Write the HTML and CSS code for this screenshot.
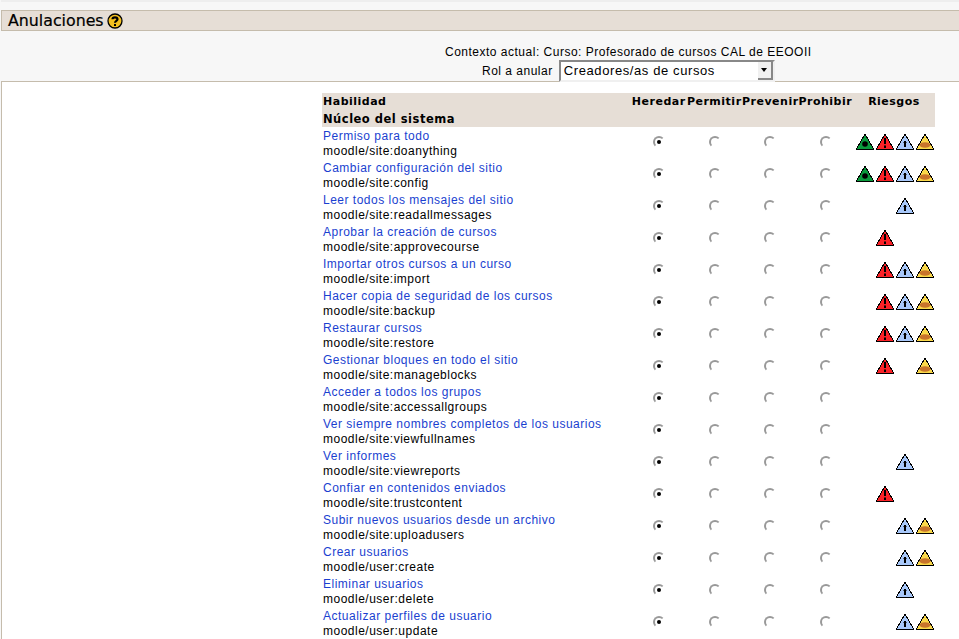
FILE: index.html

```html
<!DOCTYPE html>
<html lang="es">
<head>
  <meta charset="UTF-8" />
  <title>Anulaciones</title>
  <link rel="stylesheet" href="styles.css">
</head>
<body>
<svg class="defs" width="0" height="0">
  <symbol id="r-green" viewBox="0 0 18 17"><path class="tri" d="M9 1 17.500 16H.5Z" fill="#0a9a3c"/><circle cx="9" cy="11" r="2.800" fill="#000"/></symbol>
  <symbol id="r-red" viewBox="0 0 18 17"><path class="tri" d="M9 1 17.500 16H.5Z" fill="#fa2228"/><path d="M8 5h2v6H8ZM8 12.500h2v2.500H8Z" fill="#000"/></symbol>
  <symbol id="r-blue" viewBox="0 0 18 17"><path class="tri" d="M9 1 17.500 16H.5Z" fill="#a8c8fa"/><path d="M8 8h2v6H8ZM7.500 9h3v1h-3Z" fill="#000"/></symbol>
  <symbol id="r-yellow" viewBox="0 0 18 17"><path class="tri" d="M9 1 17.500 16H.5Z" fill="#fad84a"/><ellipse cx="9" cy="12" rx="5.500" ry="2.800" fill="#c8742c"/></symbol>
  <symbol id="r-help" viewBox="0 0 16 16"><circle cx="8" cy="8" r="7" fill="#f4c020" stroke="#000" stroke-width="1.300"/><path d="M5.500 6.200C5.500 3.800 10.500 3.800 10.500 6.200 10.500 7.800 8 7.800 8 9.800" fill="none" stroke="#000" stroke-width="2.200"/><path d="M7 11h2v2H7Z" fill="#000"/></symbol>
</svg>

<div class="topline"></div>
<h2 class="heading">Anulaciones <svg class="help"><use href="#r-help"/></svg></h2>

<div class="context">
  <div>Contexto actual: Curso: Profesorado de cursos CAL de EEOOII</div>
  <div class="role-row">
    <label>Rol a anular</label>
    <div class="fake-select"><span>Creadores/as de cursos</span><b class="arrow"></b></div>
  </div>
</div>

<div class="main">
  <table class="caps">
    <thead>
      <tr class="head1"><th class="name">Habilidad</th><th>Heredar</th><th>Permitir</th><th>Prevenir</th><th>Prohibir</th><th class="risk">Riesgos</th></tr>
      <tr class="head2"><th class="name" colspan="6">Núcleo del sistema</th></tr>
    </thead>
    <tbody>
      <tr><td class="name"><a href="#">Permiso para todo</a><br>moodle/site:doanything</td><td><i class="radio on"></i></td><td><i class="radio"></i></td><td><i class="radio"></i></td><td><i class="radio"></i></td><td class="risk"><svg><use href="#r-green"/></svg><svg><use href="#r-red"/></svg><svg><use href="#r-blue"/></svg><svg><use href="#r-yellow"/></svg></td></tr>
      <tr><td class="name"><a href="#">Cambiar configuración del sitio</a><br>moodle/site:config</td><td><i class="radio on"></i></td><td><i class="radio"></i></td><td><i class="radio"></i></td><td><i class="radio"></i></td><td class="risk"><svg><use href="#r-green"/></svg><svg><use href="#r-red"/></svg><svg><use href="#r-blue"/></svg><svg><use href="#r-yellow"/></svg></td></tr>
      <tr><td class="name"><a href="#">Leer todos los mensajes del sitio</a><br>moodle/site:readallmessages</td><td><i class="radio on"></i></td><td><i class="radio"></i></td><td><i class="radio"></i></td><td><i class="radio"></i></td><td class="risk"><svg class="no"></svg><svg class="no"></svg><svg><use href="#r-blue"/></svg><svg class="no"></svg></td></tr>
      <tr><td class="name"><a href="#">Aprobar la creación de cursos</a><br>moodle/site:approvecourse</td><td><i class="radio on"></i></td><td><i class="radio"></i></td><td><i class="radio"></i></td><td><i class="radio"></i></td><td class="risk"><svg class="no"></svg><svg><use href="#r-red"/></svg><svg class="no"></svg><svg class="no"></svg></td></tr>
      <tr><td class="name"><a href="#">Importar otros cursos a un curso</a><br>moodle/site:import</td><td><i class="radio on"></i></td><td><i class="radio"></i></td><td><i class="radio"></i></td><td><i class="radio"></i></td><td class="risk"><svg class="no"></svg><svg><use href="#r-red"/></svg><svg><use href="#r-blue"/></svg><svg><use href="#r-yellow"/></svg></td></tr>
      <tr><td class="name"><a href="#">Hacer copia de seguridad de los cursos</a><br>moodle/site:backup</td><td><i class="radio on"></i></td><td><i class="radio"></i></td><td><i class="radio"></i></td><td><i class="radio"></i></td><td class="risk"><svg class="no"></svg><svg><use href="#r-red"/></svg><svg><use href="#r-blue"/></svg><svg><use href="#r-yellow"/></svg></td></tr>
      <tr><td class="name"><a href="#">Restaurar cursos</a><br>moodle/site:restore</td><td><i class="radio on"></i></td><td><i class="radio"></i></td><td><i class="radio"></i></td><td><i class="radio"></i></td><td class="risk"><svg class="no"></svg><svg><use href="#r-red"/></svg><svg><use href="#r-blue"/></svg><svg><use href="#r-yellow"/></svg></td></tr>
      <tr><td class="name"><a href="#">Gestionar bloques en todo el sitio</a><br>moodle/site:manageblocks</td><td><i class="radio on"></i></td><td><i class="radio"></i></td><td><i class="radio"></i></td><td><i class="radio"></i></td><td class="risk"><svg class="no"></svg><svg><use href="#r-red"/></svg><svg class="no"></svg><svg><use href="#r-yellow"/></svg></td></tr>
      <tr><td class="name"><a href="#">Acceder a todos los grupos</a><br>moodle/site:accessallgroups</td><td><i class="radio on"></i></td><td><i class="radio"></i></td><td><i class="radio"></i></td><td><i class="radio"></i></td><td class="risk"></td></tr>
      <tr><td class="name"><a href="#">Ver siempre nombres completos de los usuarios</a><br>moodle/site:viewfullnames</td><td><i class="radio on"></i></td><td><i class="radio"></i></td><td><i class="radio"></i></td><td><i class="radio"></i></td><td class="risk"></td></tr>
      <tr><td class="name"><a href="#">Ver informes</a><br>moodle/site:viewreports</td><td><i class="radio on"></i></td><td><i class="radio"></i></td><td><i class="radio"></i></td><td><i class="radio"></i></td><td class="risk"><svg class="no"></svg><svg class="no"></svg><svg><use href="#r-blue"/></svg><svg class="no"></svg></td></tr>
      <tr><td class="name"><a href="#">Confiar en contenidos enviados</a><br>moodle/site:trustcontent</td><td><i class="radio on"></i></td><td><i class="radio"></i></td><td><i class="radio"></i></td><td><i class="radio"></i></td><td class="risk"><svg class="no"></svg><svg><use href="#r-red"/></svg><svg class="no"></svg><svg class="no"></svg></td></tr>
      <tr><td class="name"><a href="#">Subir nuevos usuarios desde un archivo</a><br>moodle/site:uploadusers</td><td><i class="radio on"></i></td><td><i class="radio"></i></td><td><i class="radio"></i></td><td><i class="radio"></i></td><td class="risk"><svg class="no"></svg><svg class="no"></svg><svg><use href="#r-blue"/></svg><svg><use href="#r-yellow"/></svg></td></tr>
      <tr><td class="name"><a href="#">Crear usuarios</a><br>moodle/user:create</td><td><i class="radio on"></i></td><td><i class="radio"></i></td><td><i class="radio"></i></td><td><i class="radio"></i></td><td class="risk"><svg class="no"></svg><svg class="no"></svg><svg><use href="#r-blue"/></svg><svg><use href="#r-yellow"/></svg></td></tr>
      <tr><td class="name"><a href="#">Eliminar usuarios</a><br>moodle/user:delete</td><td><i class="radio on"></i></td><td><i class="radio"></i></td><td><i class="radio"></i></td><td><i class="radio"></i></td><td class="risk"><svg class="no"></svg><svg class="no"></svg><svg><use href="#r-blue"/></svg><svg class="no"></svg></td></tr>
      <tr><td class="name"><a href="#">Actualizar perfiles de usuario</a><br>moodle/user:update</td><td><i class="radio on"></i></td><td><i class="radio"></i></td><td><i class="radio"></i></td><td><i class="radio"></i></td><td class="risk"><svg class="no"></svg><svg class="no"></svg><svg><use href="#r-blue"/></svg><svg><use href="#r-yellow"/></svg></td></tr>
    </tbody>
  </table>
</div>
</body>
</html>
```

FILE: styles.css

```css
html, body { height: 100%; overflow: hidden; }
body { margin: 0; padding-left: 1px; box-sizing: border-box; display: flex; flex-direction: column; background: #f7f7f7; color: #000; font-family: "Liberation Sans", Arial, sans-serif; font-size: 12px; letter-spacing: 0.5px; }
.defs { display: block; height: 0; flex: none; }
.topline { height: 10px; flex: none; box-sizing: border-box; border-top: 2px solid #eee; }
.heading { margin: 0; height: 21px; flex: none; box-sizing: border-box; padding-left: 6px; background: #e6ded6; border: 1px solid #c5bcac; border-width: 1px 0 1px 1px; font-family: "DejaVu Sans", sans-serif; font-size: 15.8px; line-height: 19px; font-weight: normal; letter-spacing: 0; -webkit-text-stroke: 0.2px #000; }
.help { width: 16px; height: 16px; margin-left: -2px; vertical-align: -3px; }
.context { height: 51px; flex: none; box-sizing: border-box; padding-top: 13px; padding-left: 444px; border-bottom: 1px solid #c5bcac; line-height: 16px; }
.role-row { display: flex; align-items: center; margin-left: 37px; gap: 6px; }
.fake-select { width: 216px; height: 22px; box-sizing: border-box; display: flex; align-items: flex-start; justify-content: space-between; padding: 0 0 0 3px; background: #fff; border: 2px solid; border-color: #888 #f0f0f0 #f0f0f0 #888; font-size: 13px; letter-spacing: 0.6px; line-height: 18px; }
.arrow { width: 15px; height: 18px; box-sizing: border-box; background: #f0f0f0; border-right: 2px solid #888; border-bottom: 2px solid #888; position: relative; }
.arrow::after { content: ""; position: absolute; left: 3px; top: 6px; border: 3.500px solid transparent; border-top: 4px solid #000; border-bottom: 0; }
.main { flex: 1; min-height: 0; padding: 11px 0 0 320px; background: #fff; border-left: 1px solid #c5bcac; }
.caps { width: 613px; border-collapse: collapse; table-layout: fixed; }
.caps th, .caps td { padding: 0; text-align: center; }
.caps th { background: #e6ded6; font-family: "DejaVu Sans", sans-serif; font-size: 11px; font-weight: bold; }
.head1 th { height: 17px; }
.head2 th { height: 17px; }
.caps .name { width: 309px; text-align: left; padding-left: 1px; box-sizing: border-box; }
.head2 .name { font-size: 11.500px; }
.caps td { height: 30px; padding-top: 2px; line-height: 15px; vertical-align: top; }
.caps td.name { white-space: nowrap; }
.caps a { color: #1a3fd0; text-decoration: none; }
.radio { display: inline-block; width: 8px; height: 8px; margin: 7px 0 0 1px; border-radius: 50%; border: 2px solid; border-color: #999 transparent transparent #999; position: relative; }
.radio.on::after { content: ""; position: absolute; left: 2px; top: 2px; width: 4px; height: 4px; border-radius: 50%; background: #000; }
.caps .risk { width: 82px; }
.risk svg { display: inline-block; width: 18px; height: 17px; margin-left: 2px; margin-top: 4px; }
.tri { stroke: #000; shape-rendering: crispEdges; }
```
